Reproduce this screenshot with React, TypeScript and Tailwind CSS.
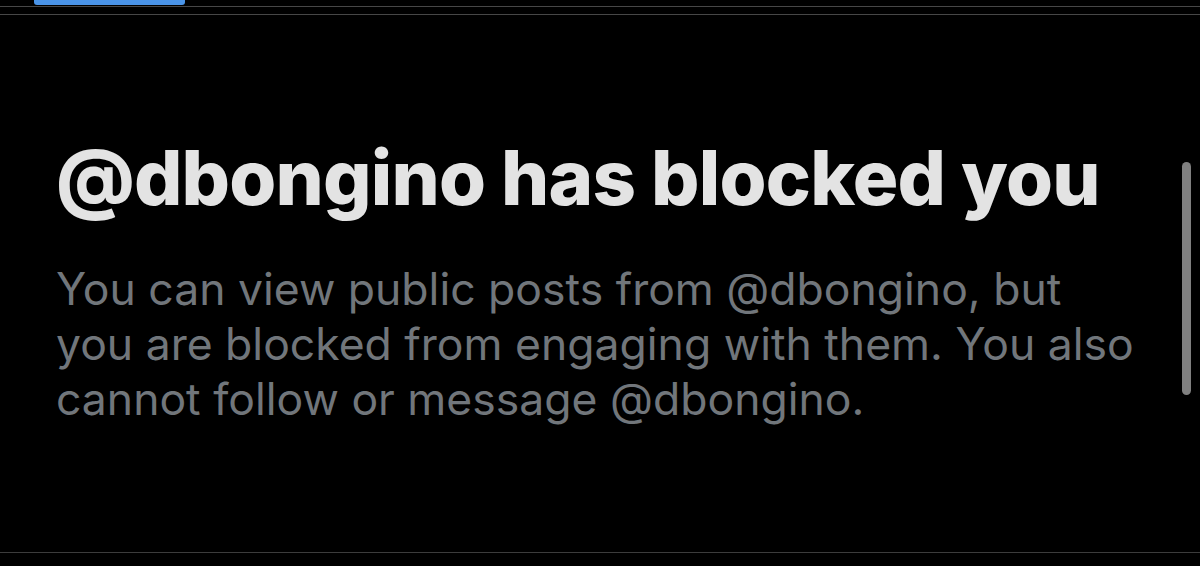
export default function App() {
  return (
    <div className="relative flex h-[566px] w-[1200px] flex-col overflow-hidden bg-black" style={{ fontFamily: 'Inter, "Liberation Sans", sans-serif' }}>
      {/* top tab indicator + divider lines */}
      <div className="h-[6px] pl-[34px]">
        <div className="h-[5px] w-[151px] rounded-b-[3px] bg-[#4a94e8]" />
      </div>
      <div className="h-px bg-[#474747]" />
      <div className="h-[7px]" />
      <div className="h-px bg-[#474747]" />

      {/* blocked notice */}
      <div className="flex-1 pl-[56px] pt-[122px]">
        <h1 className="text-[76px] font-extrabold leading-[80px] tracking-[-0.8px] text-[#e3e3e3]">
          @dbongino has blocked you
        </h1>
        <p className="mt-[45px] text-[44.5px] leading-[55px] text-[#71767b]">
          You can view public posts from @dbongino, but
          <br />
          you are blocked from engaging with them. You also
          <br />
          cannot follow or message @dbongino.
        </p>
      </div>

      <div className="h-px bg-[#3c3c3c]" />
      <div className="h-[13px]" />

      {/* scrollbar thumb */}
      <div className="absolute left-[1182px] top-[162px] h-[233px] w-[9px] rounded-full bg-[#808080]" />
    </div>
  );
}
